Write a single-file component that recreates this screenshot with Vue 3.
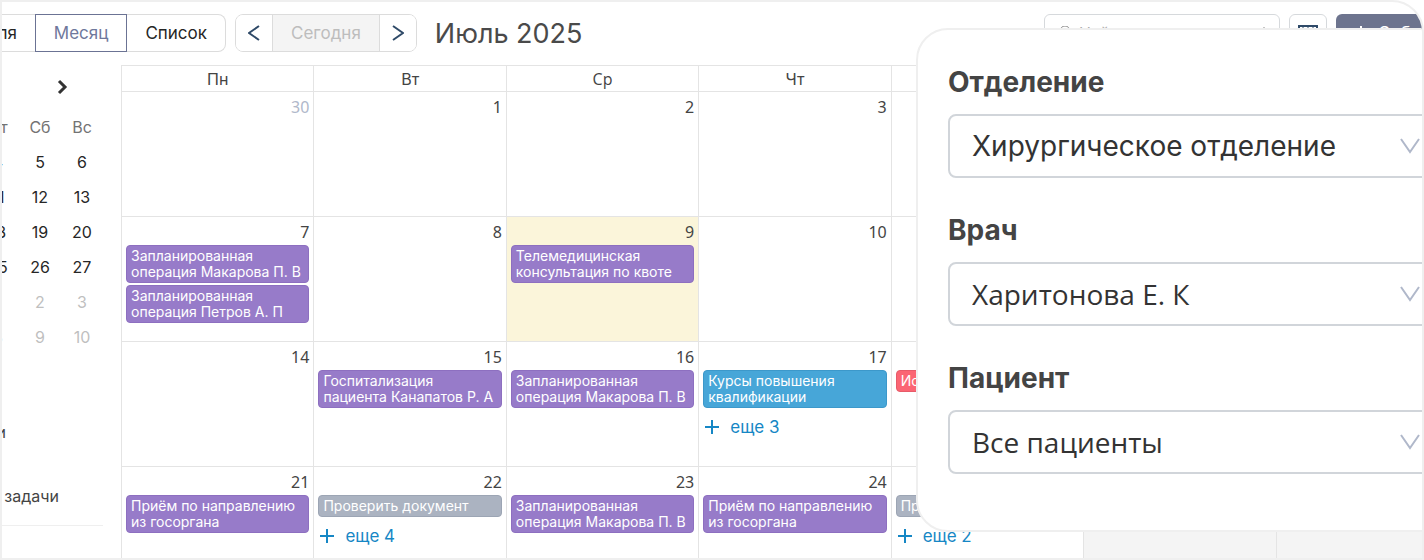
<script setup>
import { ref } from 'vue'

const dayNames = ['Пн', 'Вт', 'Ср', 'Чт', 'Пт', 'Сб', 'Вс']
const surgery = 'Запланированная операция Макарова П. В'
const weeks = [
  [{ n: 30, out: true }, { n: 1 }, { n: 2 }, { n: 3 }, { n: 4 }, { n: 5, off: true }, { n: 6, off: true }],
  [
    { n: 7, events: [{ t: surgery }, { t: 'Запланированная операция Петров А. П' }] },
    { n: 8 },
    { n: 9, today: true, events: [{ t: 'Телемедицинская консультация по квоте' }] },
    { n: 10 }, { n: 11 }, { n: 12, off: true }, { n: 13, off: true },
  ],
  [
    { n: 14 },
    { n: 15, events: [{ t: 'Госпитализация пациента Канапатов Р. А' }] },
    { n: 16, events: [{ t: surgery }] },
    { n: 17, events: [{ t: 'Курсы повышения квалификации', c: 'blue' }], more: 3 },
    { n: 18, events: [{ t: 'Исследование', c: 'red' }] },
    { n: 19, off: true }, { n: 20, off: true },
  ],
  [
    { n: 21, events: [{ t: 'Приём по направлению из госоргана' }] },
    { n: 22, events: [{ t: 'Проверить документ', c: 'gray' }], more: 4 },
    { n: 23, events: [{ t: surgery }] },
    { n: 24, events: [{ t: 'Приём по направлению из госоргана' }] },
    { n: 25, events: [{ t: 'Проверить документ', c: 'gray' }], more: 2 },
    { n: 26, off: true }, { n: 27, off: true },
  ],
]
const miniWeeks = [[4, 5, 6], [11, 12, 13], [18, 19, 20], [25, 26, 27], [1, 2, 3], [8, 9, 10]]

const fields = ref([
  { id: 'department', label: 'Отделение', value: 'Хирургическое отделение', font: 'inter' },
  { id: 'doctor', label: 'Врач', value: 'Харитонова Е. К', font: 'open' },
  { id: 'patient', label: 'Пациент', value: 'Все пациенты', font: 'open' },
])
</script>

<template>
  <main class="frame">
    <header class="toolbar">
      <div class="group views">
        <button type="button">Неделя</button>
        <button type="button" class="active">Месяц</button>
        <button type="button">Список</button>
      </div>
      <div class="group nav">
        <button type="button" aria-label="Предыдущий месяц">
          <svg width="12" height="16" viewBox="0 0 12 16"><path d="M11 1 1 8l10 7" /></svg>
        </button>
        <button type="button" class="now" disabled>Сегодня</button>
        <button type="button" aria-label="Следующий месяц">
          <svg width="12" height="16" viewBox="0 0 12 16"><path d="m1 1 10 7-10 7" /></svg>
        </button>
      </div>
      <h1>Июль 2025</h1>
      <div class="tools">
        <label class="search">
          <svg width="14" height="14" viewBox="0 0 14 14"><circle cx="6" cy="5" r="5" /><path d="m10 9 4 4" /></svg>
          <input type="text" placeholder="Найти" aria-label="Найти" />
          <svg width="6" height="14" viewBox="0 0 6 14"><path d="M3 1v12" /></svg>
        </label>
        <button type="button" class="grid-btn" aria-label="Таблица">
          <svg width="20" height="18" viewBox="0 0 20 18"><path d="M1 2h18v15H1z" /><path class="thin" d="M1 7h18M5 2v15M10 2v15M15 2v15" /></svg>
        </button>
        <button type="button" class="add">
          <svg width="14" height="14" viewBox="0 0 14 14"><path d="M7 0v14M0 7h14" /></svg>
          Событие
        </button>
      </div>
    </header>

    <div class="body">
      <aside class="sidebar">
        <div class="mini-head">
          <span>Июль 2025</span>
          <button type="button" aria-label="Вперёд">
            <svg width="12" height="16" viewBox="0 0 12 16"><path d="m2 2 6 6-6 6" /></svg>
          </button>
        </div>
        <table class="mini">
          <thead>
            <tr><th>Пт</th><th>Сб</th><th>Вс</th></tr>
          </thead>
          <tbody>
            <tr v-for="(row, i) in miniWeeks" :key="i" :class="{ next: i > 3 }">
              <td v-for="d in row" :key="d">{{ d }}</td>
            </tr>
          </tbody>
        </table>
        <ul class="lists">
          <li class="short"><span>Календари</span></li>
          <li><span>Мои задачи</span></li>
        </ul>
      </aside>

      <div class="calendar">
        <table class="month">
          <thead>
            <tr><th v-for="(d, i) in dayNames" :key="d" :class="{ open: i === 2 }">{{ d }}</th></tr>
          </thead>
          <tbody>
            <tr v-for="(week, w) in weeks" :key="w">
              <td v-for="day in week" :key="day.n" :class="{ out: day.out, today: day.today, off: day.off }">
                <div class="num">{{ day.n }}</div>
                <div v-for="(e, k) in day.events" :key="k" class="event" :class="e.c">{{ e.t }}</div>
                <a v-if="day.more" href="#" class="more">
                  <svg width="14" height="14" viewBox="0 0 14 14"><path d="M7 0v14M0 7h14" /></svg>
                  еще {{ day.more }}
                </a>
              </td>
            </tr>
          </tbody>
        </table>
      </div>
    </div>

    <form class="panel">
      <div v-for="f in fields" :key="f.id" class="field">
        <label :for="f.id">{{ f.label }}</label>
        <div class="select" :class="f.font">
          <select :id="f.id" v-model="f.value"><option>{{ f.value }}</option></select>
          <svg width="20" height="16" viewBox="0 0 20 16"><path d="m1 1 9 13 9-13" /></svg>
        </div>
      </div>
    </form>
  </main>
</template>

<style>
body { margin: 0; background: #fff; }
</style>

<style scoped>
* { box-sizing: border-box; }
.frame {
  position: relative;
  height: 100vh;
  overflow: hidden;
  border: 2px solid #efefef;
  border-top-right-radius: 32px;
  background: #fff;
  color: #444;
  font: 16px/20px Inter, "Noto Sans", sans-serif;
}
button { margin: 0; font: inherit; color: #262626; background: #fff; cursor: pointer; }
svg { fill: none; flex: none; }
table { border-collapse: collapse; table-layout: fixed; }
th { font-weight: 400; }

.toolbar { display: flex; align-items: center; height: 62px; margin-bottom: 1px; }
.toolbar button { font-size: 17px; }
.group { display: flex; height: 38px; border: 1px solid #dcdcdc; border-radius: 8px; }
.group button { border: 0; padding: 0 18px; }
.views { width: 226px; margin-left: -2px; border-left: 0; justify-content: flex-end; border-radius: 0 8px 8px 0; }
.views button { flex: none; background: none; }
.views .active { margin: -1px 0; border: 1px solid #6b7394; color: #6f789c; }
.nav { margin-left: 9px; overflow: hidden; }
.group.nav button { display: flex; align-items: center; padding: 0 12px; }
.nav svg { stroke: #2f4a68; stroke-width: 2; }
.group.nav .now { padding: 0 18px; border: solid #dcdcdc; border-width: 0 1px; background: #f4f4f4; color: #bdbdbd; }
h1 { margin: 0 0 0 18px; font-size: 27px; line-height: 34px; padding-top: 2px; font-weight: 400; color: #4a4a4a; }
.tools { display: flex; gap: 9px; margin-left: auto; margin-right: -61px; height: 38px; }
.tools > * { border: 1px solid #d6d9dc; border-radius: 6px; }
.search { display: flex; align-items: center; width: 236px; padding: 0 12px 0 14px; gap: 6px; }
.search svg { stroke: #8c8c8c; }
.search input { flex: 1; min-width: 0; border: 0; padding: 0; background: none; font: inherit; outline: 0; }
.search input::placeholder { color: #aaa; }
.grid-btn { display: flex; align-items: center; width: 38px; padding: 0 8px; }
.grid-btn svg { stroke: #2f4a68; stroke-width: 2; }
.grid-btn .thin { stroke-width: 1; }
.tools .add { display: flex; align-items: center; gap: 10px; width: 147px; padding: 0 18px; border: 0; background: #6d748e; color: #fff; }
.add svg { stroke: #fff; stroke-width: 2; }

.body { display: flex; }
.sidebar { flex: none; width: 101px; margin-right: 18px; }
.mini-head { display: flex; align-items: center; justify-content: flex-end; height: 44px; padding-right: 34px; gap: 55px; }
.mini-head span { flex: none; color: #8c8c8c; }
.mini-head button { display: flex; border: 0; padding: 0; background: none; }
.mini-head svg { stroke: #333; stroke-width: 3; }
.mini { width: 126px; margin-left: -25px; color: #262626; text-align: center; }
.mini tr { height: 35px; }
.mini th { color: #737373; }
.mini th, .mini td { padding: 0; }
.mini .next { color: #bfbfbf; }
.lists { margin: 0; padding: 0; list-style: none; }
.lists li { display: flex; justify-content: flex-end; padding: 20px 44px 19px 0; border-bottom: 1px solid #efefef; white-space: nowrap; }
.lists .short { padding: 68px 97px 24px 0; border: 0; }

.calendar { flex: 1; min-width: 0; }
.month { width: calc(100% + 47px); }
.month th, .month td { border: 1px solid #e4e4e4; }
.month th { height: 26px; padding: 0; }
.month th.open { font-family: "Open Sans", sans-serif; }
.month td { height: 125px; padding: 5px 4px 0; vertical-align: top; }
.num { margin-bottom: 3px; text-align: right; font-family: "Noto Sans", sans-serif; }
.out .num { color: #b0b8ca; }
.month .today { background: #fbf5da; }
.month .off { background: #f4f4f4; }
.event {
  margin-bottom: 2px;
  padding: 2px 4px;
  border: 1px solid #8d6fc0;
  border-radius: 4px;
  background: #977bc9;
  color: #fff;
  font-size: 14px;
  line-height: 16px;
}
.event.blue { background: #47a6d8; border-color: #3c98ca; }
.event.red { background: #fb6573; border-color: #e75b69; }
.event.gray { background: #abb3c1; border-color: #9ca5b4; }
.more { display: flex; align-items: center; gap: 11px; padding: 7px 2px; color: #1687c5; font-size: 17px; text-decoration: none; }
.more svg { stroke: currentColor; stroke-width: 2; }

.panel {
  position: absolute;
  top: 26px;
  left: 914px;
  right: -30px;
  display: flex;
  flex-direction: column;
  gap: 34px;
  padding: 34px 0 56px 30px;
  border: 2px solid #efefef;
  border-radius: 32px;
  background: #fff;
}
.field label { display: block; margin-bottom: 14px; font-size: 28px; line-height: 36px; font-weight: 700; }
.select { display: flex; align-items: center; height: 64px; border: 2px solid #d1d5da; border-radius: 8px; padding-right: 28px; }
.select select { flex: 1; height: 100%; border: 0; padding: 0 22px; background: none; color: #333; appearance: none; font: 28px/36px Inter, sans-serif; outline: 0; }
.select.open select { font-family: "Open Sans", sans-serif; }
.select svg { stroke: #b0b8ca; stroke-width: 2; }
</style>
